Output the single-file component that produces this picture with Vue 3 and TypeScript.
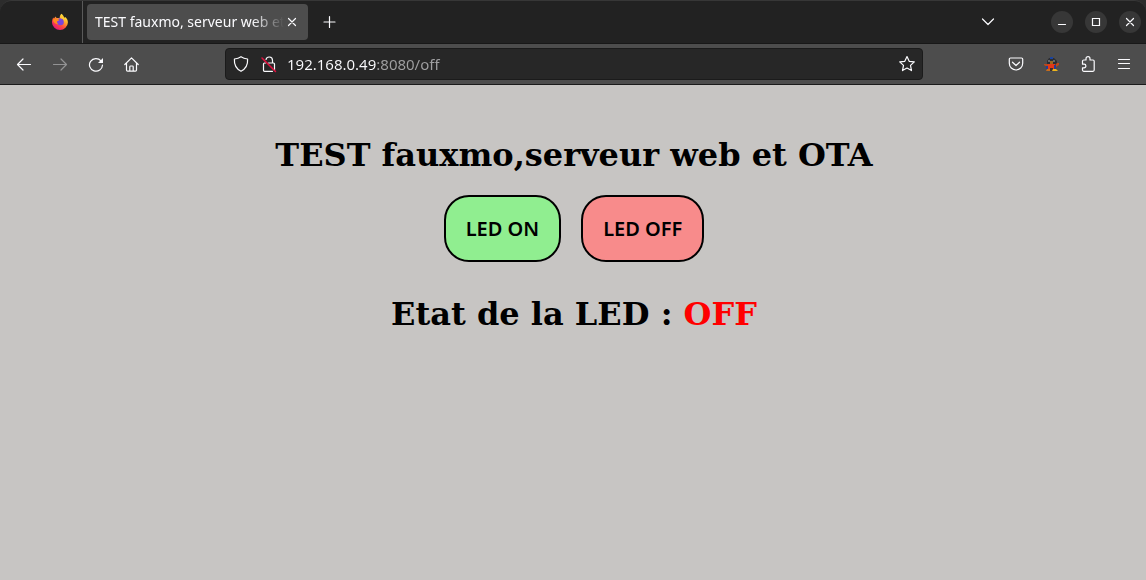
<script setup lang="ts">
import { ref } from 'vue'

const address = ref('192.168.0.49:8080/off')
const state = ref<'ON' | 'OFF'>('OFF')

function setLed(next: 'ON' | 'OFF') {
  state.value = next
  address.value = `192.168.0.49:8080/${next.toLowerCase()}`
}
</script>

<template>
  <div class="browser">
    <header class="chrome">
      <div class="tabbar">
        <button class="pinned" type="button" aria-label="Firefox">
          <svg width="18" height="18" viewBox="0 0 18 18">
            <defs>
              <linearGradient id="flame" x1="0.85" y1="0.1" x2="0.25" y2="0.95">
                <stop offset="0" stop-color="#fff044" />
                <stop offset="0.35" stop-color="#ffa52b" />
                <stop offset="0.65" stop-color="#ff4a3d" />
                <stop offset="1" stop-color="#e5177b" />
              </linearGradient>
            </defs>
            <path d="M10.3 .8c1.600 1.100 2.300 2.400 2.900 3.900l1-.6c2 1.600 2.700 3.400 2.700 5.400A8 7.800 0 0 1 9 17a8 7.800 0 0 1-8-7.600c0-2.100.5-3.600 1.300-4.900l.6.900L4.700 3.500l.8 1.500c1.200-.2 2.300 0 3.100.3C8.700 3.600 9.200 2 10.300.8z" fill="url(#flame)" />
            <circle cx="9.400" cy="8.800" r="3.500" fill="#7a45dc" />
            <path d="M1.800 6.500c1.700-1.200 4.400-1 6.600.3-.4.900-1.400 1-2.200 1.400-.4 1 .2 2.300 1.300 3.300-3.200-.1-5.400-2.100-5.700-5z" fill="#ff8a1d" />
            <path d="M9.600 5.200c2.400.3 3.600 1.800 3.300 4.200 1.400-2.400.3-5-1.800-6.200z" fill="#ffc933" />
          </svg>
        </button>
        <div class="tab">
          <button class="tab-title" type="button">TEST fauxmo, serveur web et</button>
          <button class="tab-close" type="button" aria-label="Fermer l'onglet">
            <svg width="10" height="10" viewBox="0 0 10 10" class="line"><path d="M1.500 1.500l7 7M8.500 1.500l-7 7" /></svg>
          </button>
        </div>
        <button class="icon new-tab" type="button" aria-label="Nouvel onglet">
          <svg width="14" height="14" viewBox="0 0 14 14" class="line"><path d="M6.500 1.500v11M1 7h11" /></svg>
        </button>
        <button class="icon all-tabs" type="button" aria-label="Lister les onglets">
          <svg width="14" height="8" viewBox="0 0 14 8" class="line"><path d="M1.500 1L7 6.500 12.500 1" /></svg>
        </button>
        <div class="window-controls">
          <button type="button" aria-label="Réduire">
            <svg width="10" height="10" viewBox="0 0 10 10" class="line"><path d="M1.500 7.500h7" /></svg>
          </button>
          <button type="button" aria-label="Agrandir">
            <svg width="10" height="10" viewBox="0 0 10 10" class="line"><path d="M1.500 1.500h7v7h-7z" stroke-linejoin="miter" /></svg>
          </button>
          <button type="button" aria-label="Fermer">
            <svg width="10" height="10" viewBox="0 0 10 10" class="line"><path d="M1.500 1.500l7 7M8.500 1.500l-7 7" /></svg>
          </button>
        </div>
      </div>

      <div class="toolbar">
        <nav class="navigation">
          <button class="icon" type="button" aria-label="Précédent">
            <svg width="16" height="16" viewBox="0 0 16 16" class="line"><path d="M14.500 8.500h-13M7 3L1.500 8.500 7 14" /></svg>
          </button>
          <button class="icon" type="button" aria-label="Suivant" disabled>
            <svg width="16" height="16" viewBox="0 0 16 16" class="line"><path d="M1.500 8.500h13M9 3l5.500 5.500L9 14" /></svg>
          </button>
          <button class="icon" type="button" aria-label="Actualiser">
            <svg width="16" height="16" viewBox="0 0 16 16" class="line">
              <path d="M13 4.800A6.500 6.300 0 1 0 14.500 9" />
              <path d="M15 2v5h-5z" class="solid" />
            </svg>
          </button>
          <button class="icon" type="button" aria-label="Accueil">
            <svg width="16" height="16" viewBox="0 0 16 16" class="line">
              <path d="M.8 8.500L7.500 1.900l6.700 6.600M2.500 7v7c0 .7.400 1.100 1.100 1.100h7.800c.7 0 1.100-.4 1.100-1.100V7M5.800 15v-4.200c0-.5.3-.8.8-.8h1.800c.5 0 .8.300.8.800V15" />
            </svg>
          </button>
        </nav>

        <div class="urlbar">
          <div class="security">
            <svg width="16" height="18" viewBox="0 0 16 18" class="line">
              <path d="M8 1.700c2 1.400 4.100 2 6.600 2.300.4 5.600-1.900 9.800-6.600 12.300C3.300 13.800 1 9.600 1.400 4 3.900 3.700 6 3.100 8 1.700z" />
            </svg>
            <svg width="16" height="18" viewBox="0 0 16 18" class="line">
              <path d="M5 4.500a3.300 3.300 0 0 1 6.500.7V8M7.500 8H12.500c.6 0 1 .4 1 1v6.200M11.500 16.300h-8c-.6 0-1-.4-1-1V9c0-.6.4-1 1-1H4.500" />
              <path d="M1 3l13.500 13.500" class="slash" />
            </svg>
          </div>
          <input v-model="address" type="text" aria-label="Adresse" spellcheck="false" />
          <button class="icon bookmark" type="button" aria-label="Marque-page">
            <svg width="18" height="18" viewBox="0 0 18 18" class="line">
              <path d="M9 1.600l2.200 4.700 5.100.6-3.800 3.500 1 5.200L9 13.100l-4.500 2.500 1-5.200-3.800-3.500 5.100-.6z" />
            </svg>
          </button>
        </div>

        <div class="tools">
          <button class="icon" type="button" aria-label="Pocket">
            <svg width="16" height="16" viewBox="0 0 16 16" class="line">
              <path d="M2.500 2h11c.7 0 1.200.5 1.200 1.200v4.100a6.700 6.700 0 0 1-13.400 0V3.200C1.300 2.500 1.800 2 2.500 2z" />
              <path d="M4.500 6.200L8 9.500l3.500-3.300" />
            </svg>
          </button>
          <button class="icon" type="button" aria-label="Extension">
            <svg width="16" height="16" viewBox="0 0 16 16">
              <path d="M5 2h5l3 3v4H3V5z" fill="#2b2d33" />
              <path d="M6 1h3v2H6z" fill="#1c459f" />
              <path d="M4 4h2v2H4zM9 4h2v2H9z" fill="#62676b" />
              <path d="M6 5h3v3H6z" fill="#9c6720" />
              <path d="M0 8h4l2 1h5l2-2h2v2l-3 2H3L0 9z" fill="#b9471c" />
              <path d="M4 8h7v5H4z" fill="#e33816" />
              <path d="M2 10h2v3H2zM10 9h2v4h-2z" fill="#263b95" />
              <path d="M6 12h3v3H6z" fill="#3b302d" />
              <path d="M3 13h3v2H2z" fill="#c66c1c" />
              <path d="M9 13h3l2 2H8z" fill="#edb51d" />
            </svg>
          </button>
          <button class="icon" type="button" aria-label="Extensions">
            <svg width="16" height="18" viewBox="0 0 16 18" class="line">
              <path d="M6 5V3.700a2 2 0 0 1 4 0V5h3c.7 0 1.200.5 1.200 1.200v8.900c0 .7-.5 1.200-1.200 1.200H3.700c-.7 0-1.200-.5-1.200-1.200v-2.300h1.600a1.800 1.800 0 0 0 0-3.600H2.500v-3C2.500 5.500 3 5 3.700 5z" />
            </svg>
          </button>
          <button class="icon" type="button" aria-label="Menu">
            <svg width="14" height="14" viewBox="0 0 14 14" class="line"><path d="M1.500 2.500h11M1.500 6.500h11M1.500 11.500h11" /></svg>
          </button>
        </div>
      </div>
    </header>

    <main class="page">
      <h1>TEST fauxmo,serveur web et OTA</h1>
      <div class="actions">
        <button class="led on" type="button" @click="setLed('ON')">LED ON</button>
        <button class="led off" type="button" @click="setLed('OFF')">LED OFF</button>
      </div>
      <h1>Etat de la LED : <span :class="state === 'OFF' ? 'state-off' : 'state-on'">{{ state }}</span></h1>
    </main>
  </div>
</template>

<style>
body {
  margin: 0;
  background: #c7c5c3;
}
</style>

<style scoped>
.browser {
  min-height: 100vh;
  display: flex;
  flex-direction: column;
  background: #c7c5c3;
  font-family: "Noto Sans", "Open Sans", sans-serif;
  color: #fbfbfe;
}

button {
  margin: 0;
  padding: 0;
  border: 0;
  background: none;
  color: inherit;
  font: inherit;
}

svg {
  display: block;
  flex: none;
}

.line {
  fill: none;
  stroke: #fbfbfe;
  stroke-width: 1.2;
  stroke-linecap: round;
  stroke-linejoin: round;
}

.line .solid {
  fill: #fbfbfe;
  stroke: none;
}

.line .slash {
  stroke: #e2103f;
  stroke-width: 1.5;
}

.chrome {
  background: #2c2c2c;
}

.tabbar {
  display: flex;
  align-items: center;
  height: 44px;
  box-sizing: border-box;
  border-top: 1px solid #373737;
  border-bottom: 1px solid #181818;
  border-radius: 12px 12px 0 0;
  background: #222222;
}

.pinned {
  display: flex;
  justify-content: flex-end;
  align-items: center;
  align-self: stretch;
  width: 83px;
  box-sizing: border-box;
  padding-right: 13px;
  border-right: 1px solid #5a5a5a;
}

.tab {
  display: flex;
  align-items: center;
  width: 221px;
  height: 36px;
  box-sizing: border-box;
  margin-left: 4px;
  padding: 0 8px;
  border-radius: 4px;
  background: #4d4d4d;
}

.tab-title {
  flex: 1;
  min-width: 0;
  overflow: hidden;
  white-space: nowrap;
  text-align: left;
  font-size: 14px;
  line-height: 22px;
  mask-image: linear-gradient(to left, transparent, #000 32px);
}

.tab-close {
  display: flex;
  justify-content: center;
  width: 16px;
}

.icon {
  display: flex;
  align-items: center;
  justify-content: center;
  width: 36px;
  height: 32px;
}

.icon:disabled {
  opacity: 0.4;
}

.new-tab {
  margin-left: 4px;
}

.all-tabs {
  margin-left: auto;
}

.window-controls {
  display: flex;
  gap: 12px;
  margin-left: 45px;
  padding-right: 5px;
}

.window-controls button {
  display: flex;
  align-items: center;
  justify-content: center;
  width: 22px;
  height: 22px;
  border-radius: 50%;
  background: #373737;
}

.toolbar {
  display: flex;
  align-items: center;
  height: 41px;
  box-sizing: border-box;
  padding: 0 4px 0 6px;
  border-bottom: 1px solid #1b1b1b;
  background: #4d4d4d;
}

.navigation,
.tools {
  display: flex;
}

.urlbar {
  display: flex;
  flex: 1;
  align-items: center;
  min-width: 0;
  height: 32px;
  box-sizing: border-box;
  margin: 0 75px;
  padding-left: 7px;
  border: 1px solid #1b1b1b;
  border-radius: 4px;
  background: #272727;
}

.security {
  display: flex;
  gap: 12px;
}

.urlbar input {
  flex: 1;
  min-width: 0;
  height: 24px;
  margin: 0 12px 0 10px;
  padding: 0;
  border: 0;
  outline: 0;
  font-family: inherit;
  font-size: 15px;
  color: transparent;
  caret-color: #fbfbfe;
  background: linear-gradient(to right, #fbfbfe 90px, #a0a0a2 90px);
  -webkit-background-clip: text;
  background-clip: text;
}

.bookmark {
  width: 30px;
}

.page {
  display: flex;
  flex: 1;
  flex-direction: column;
  align-items: center;
  padding: 51px 8px 24px 10px;
  color: #000000;
}

h1 {
  margin: 0;
  font-family: "DejaVu Serif", serif;
  font-size: 32px;
  font-weight: bold;
  line-height: 38px;
  text-align: center;
}

.actions {
  display: flex;
  gap: 20px;
  margin: 21px 0 33px;
}

.led {
  padding: 18px 20px;
  border: 2px solid #000000;
  border-radius: 25px;
  font-size: 20px;
  font-weight: 600;
  line-height: 27px;
}

.led.on {
  background: #90ee90;
}

.led.off {
  background: #f88b8b;
}

.state-off {
  color: #ff0000;
}

.state-on {
  color: #008000;
}
</style>
